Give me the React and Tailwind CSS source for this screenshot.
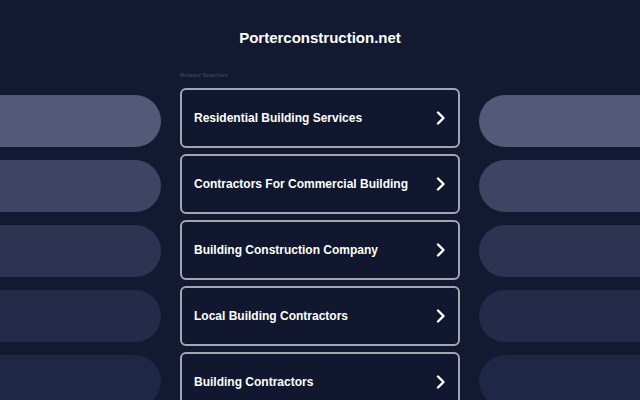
export default function App() {
  const bars = ["bg-[#525a78]", "bg-[#3d4563]", "bg-[#2c3452]", "bg-[#232b49]", "bg-[#1f2746]"];
  const links = [
    "Residential Building Services",
    "Contractors For Commercial Building",
    "Building Construction Company",
    "Local Building Contractors",
    "Building Contractors",
  ];

  return (
    <div className="w-[640px] h-[400px] overflow-hidden bg-[#121930] flex font-['Liberation_Sans',Arial,sans-serif]">
      {/* left decoration */}
      <div className="w-[161px] shrink-0 pt-[95px] flex flex-col gap-[13px]">
        {bars.map((c, i) => (
          <div key={i} className={`h-[52px] shrink-0 rounded-r-[26px] ${c}`} />
        ))}
      </div>

      {/* main column */}
      <div className="w-[280px] shrink-0 ml-[19px] flex flex-col">
        <h1 className="mt-[28px] h-[20px] leading-[20px] text-center text-white font-bold text-[15px]">
          Porterconstruction.net
        </h1>
        <p className="mt-[23px] h-[8px] leading-[8px] text-[6px] text-[#464d68]">Related Searches</p>
        <div className="mt-[9px] flex flex-col gap-[6px]">
          {links.map((t) => (
            <div
              key={t}
              className="h-[60px] shrink-0 rounded-[6px] border-2 border-[#a3a7b3] bg-[#10172e] flex items-center justify-between pl-[12px] pr-[12px]"
            >
              <span className="text-white font-bold text-[12px]">{t}</span>
              <svg width="10" height="14" viewBox="0 0 10 14" fill="none">
                <path d="M2 1.5 L7.5 7 L2 12.5" stroke="white" strokeWidth="2.4" strokeLinecap="round" strokeLinejoin="round" />
              </svg>
            </div>
          ))}
        </div>
      </div>

      {/* right decoration */}
      <div className="flex-1 ml-[19px] pt-[95px] flex flex-col gap-[13px]">
        {bars.map((c, i) => (
          <div key={i} className={`h-[52px] shrink-0 rounded-l-[26px] ${c}`} />
        ))}
      </div>
    </div>
  );
}
